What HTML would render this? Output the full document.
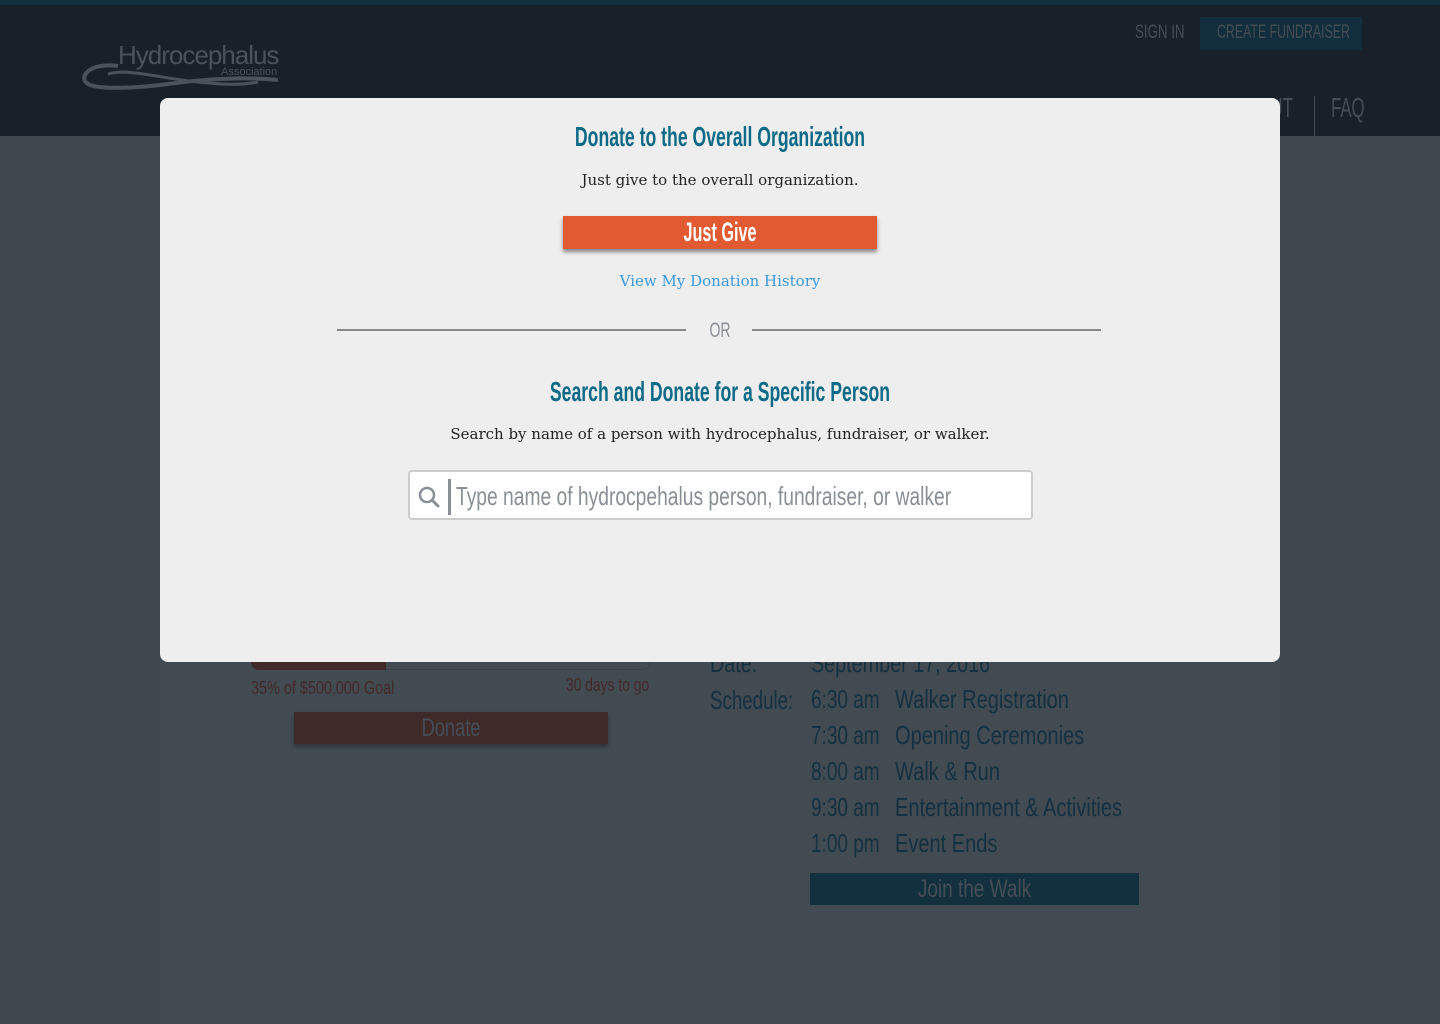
<!DOCTYPE html>
<html><head><meta charset="utf-8"><style>
*{margin:0;padding:0;box-sizing:border-box}
body{width:1440px;height:1024px;overflow:hidden;background:#40474f;position:relative;font-family:"Liberation Sans",sans-serif}
.c{font-family:"Liberation Sans",sans-serif;position:absolute;white-space:nowrap;transform-origin:0 0}
.cc{transform-origin:50% 0}
.s{font-family:"DejaVu Serif","Liberation Serif",serif;position:absolute;white-space:nowrap}
</style></head><body>
<div style="position:absolute;left:0;top:0;width:1440px;height:5px;background:#13303f"></div>
<div style="position:absolute;left:0;top:5px;width:1440px;height:131px;background:#182029"></div>
<div style="position:absolute;left:160px;top:136px;width:1120px;height:888px;background:#424a52"></div>
<!-- logo -->
<div class="c" style="left:118px;top:40px;font-size:26px;color:#4a525b;letter-spacing:-1px">Hydrocephalus</div>
<div class="c" style="left:221px;top:66px;font-size:11px;color:#4a525b">Association</div>
<svg style="position:absolute;left:78px;top:58px" width="200" height="38"><path d="M40 8 C10 4 0 20 10 26 C20 32 60 30 90 26 C120 22 160 18 200 22" stroke="#4a525b" stroke-width="4" fill="none"/><path d="M30 16 C50 10 80 20 120 24 C140 26 160 28 180 24" stroke="#4a525b" stroke-width="3" fill="none"/></svg>
<div class="c" style="left:1135px;top:22px;font-size:19px;color:#454d56;transform:scaleX(.7)">SIGN IN</div>
<div style="position:absolute;left:1200px;top:17px;width:162px;height:33px;background:#122d3b"></div>
<div class="c" style="left:1217px;top:22px;font-size:19px;color:#454d56;transform:scaleX(.65)">CREATE FUNDRAISER</div>
<div class="c" style="left:1270px;top:92px;font-size:28px;color:#454d56;transform:scaleX(.62)">UT</div>
<div style="position:absolute;left:1314px;top:96px;width:1px;height:40px;background:#454d56"></div>
<div class="c" style="left:1331px;top:92px;font-size:28px;color:#454d56;transform:scaleX(.6)">FAQ</div>
<!-- bg content -->
<div style="position:absolute;left:251px;top:650px;width:400px;height:20px;border:1px solid #3a4149;border-radius:0 0 8px 8px"></div>
<div style="position:absolute;left:251px;top:650px;width:135px;height:20px;background:#432a2a;border-radius:0 0 0 8px"></div>
<div class="c" style="left:251px;top:678px;font-size:18px;color:#432a2a;transform:scaleX(.8)">35% of $500,000 Goal</div>
<div class="c" style="left:566px;top:675px;font-size:18px;color:#432a2a;transform:scaleX(.77)">30 days to go</div>
<div style="position:absolute;left:294px;top:712px;width:314px;height:32px;background:#3f2a2a;box-shadow:0 3px 4px rgba(0,0,0,.3)"></div>
<div class="c cc" style="left:294px;top:714px;width:314px;text-align:center;font-size:25px;color:#454d56;transform:scaleX(.73)">Donate</div>
<div class="c" style="left:710px;top:648px;font-size:26px;color:#15303f;transform:scaleX(.76)">Date:</div>
<div class="c" style="left:811px;top:648px;font-size:26px;color:#15303f;transform:scaleX(.76)">September 17, 2016</div>
<div class="c" style="left:710px;top:685px;font-size:26px;color:#15303f;transform:scaleX(.72)">Schedule:</div>
<div class="c" style="left:811px;top:681px;font-size:26px;color:#15303f;line-height:36px;transform:scaleX(.73)">6:30 am<br>7:30 am<br>8:00 am<br>9:30 am<br>1:00 pm</div>
<div class="c" style="left:895px;top:681px;font-size:26px;color:#15303f;line-height:36px;transform:scaleX(.77)">Walker Registration<br>Opening Ceremonies<br>Walk &amp; Run<br>Entertainment &amp; Activities<br>Event Ends</div>
<div style="position:absolute;left:810px;top:873px;width:329px;height:32px;background:#13303f"></div>
<div class="c cc" style="left:810px;top:875px;width:329px;text-align:center;font-size:25px;color:#454d56;transform:scaleX(.76)">Join the Walk</div>
<!-- modal -->
<div style="position:absolute;left:160px;top:98px;width:1120px;height:564px;background:#eeeeee;border-radius:8px"></div>
<div class="c cc" style="left:160px;width:1120px;text-align:center;top:121px;font-size:28px;font-weight:bold;color:#0e6a86;transform:scaleX(.63)">Donate to the Overall Organization</div>
<div class="s" style="left:160px;width:1120px;text-align:center;top:171px;font-size:15px;color:#222">Just give to the overall organization.</div>
<div style="position:absolute;left:563px;top:216px;width:314px;height:33px;background:#e15a32;box-shadow:0 3px 4px rgba(0,0,0,.45)"></div>
<div class="c cc" style="left:563px;width:314px;text-align:center;top:217px;font-size:27px;font-weight:bold;color:#fff;transform:scaleX(.6)">Just Give</div>
<div class="s" style="left:160px;width:1120px;text-align:center;top:272px;font-size:15px;color:#3a9ae0">View My Donation History</div>
<div style="position:absolute;left:337px;top:329px;width:349px;height:2px;background:#888"></div>
<div style="position:absolute;left:752px;top:329px;width:349px;height:2px;background:#888"></div>
<div class="c cc" style="left:700px;width:40px;text-align:center;top:319px;font-size:21px;color:#8a8f95;transform:scaleX(.67)">OR</div>
<div class="c cc" style="left:160px;width:1120px;text-align:center;top:376px;font-size:28px;font-weight:bold;color:#0e6a86;transform:scaleX(.63)">Search and Donate for a Specific Person</div>
<div class="s" style="left:160px;width:1120px;text-align:center;top:425px;font-size:15px;color:#222">Search by name of a person with hydrocephalus, fundraiser, or walker.</div>
<div style="position:absolute;left:408px;top:470px;width:625px;height:50px;background:#fff;border:2px solid #ccc;border-radius:4px"></div>
<svg style="position:absolute;left:418px;top:486px" width="22" height="22"><circle cx="9" cy="9" r="7" stroke="#8a8f95" stroke-width="2.5" fill="none"/><path d="M14 14 L20 20" stroke="#8a8f95" stroke-width="3" stroke-linecap="round"/></svg>
<div style="position:absolute;left:448px;top:479px;width:3px;height:36px;background:#8a8f95"></div>
<div class="c" style="left:456px;top:481px;font-size:26px;color:#8a8f95;transform:scaleX(.74)">Type name of hydrocpehalus person, fundraiser, or walker</div>
</body></html>
